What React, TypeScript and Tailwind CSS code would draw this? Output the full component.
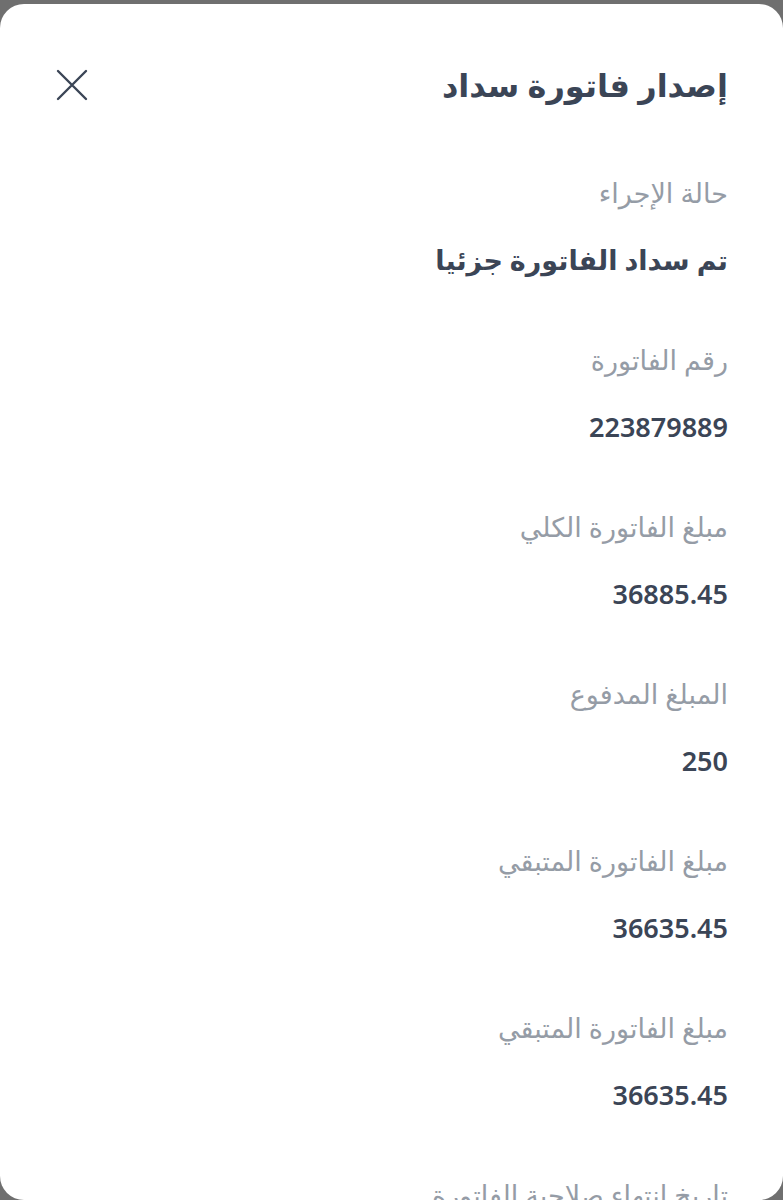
const rows = [
  { label: "حالة الإجراء", value: "تم سداد الفاتورة جزئيا" },
  { label: "رقم الفاتورة", value: "223879889" },
  { label: "مبلغ الفاتورة الكلي", value: "36885.45" },
  { label: "المبلغ المدفوع", value: "250" },
  { label: "مبلغ الفاتورة المتبقي", value: "36635.45" },
  { label: "مبلغ الفاتورة المتبقي", value: "36635.45" },
  { label: "تاريخ انتهاء صلاحية الفاتورة", value: "" },
]

export default function App() {
  return (
    <div className="h-[1200px] overflow-hidden bg-[#6f6f6f] pt-[4px] font-['Noto_Sans','DejaVu_Sans',sans-serif]">
      <div dir="rtl" className="h-[1196px] overflow-hidden rounded-[24px] bg-white pl-[55px] pr-[55px] pt-[53px]">
        <header className="flex h-[56px] items-center justify-between">
          <h1 className="text-[32px] font-bold text-[#3b4556]">إصدار فاتورة سداد</h1>
          <button className="flex h-[34px] w-[34px] items-center justify-center text-[#3b4556]">
            <svg viewBox="0 0 32 32" className="h-[32px] w-[32px]" fill="none" stroke="currentColor" strokeWidth={2.4} strokeLinecap="round">
              <path d="M2 2 30 30M30 2 2 30" />
            </svg>
          </button>
        </header>

        <div className="mt-[60px] flex flex-col gap-[60px]">
          {rows.map((row, i) => (
            <div key={i} className="flex flex-col gap-[27px]">
              <p className="text-[27px] leading-[40px] text-[#959ca6]">{row.label}</p>
              {row.value ? (
                <p className="text-[27px] font-semibold leading-[40px] text-[#3b4556]">{row.value}</p>
              ) : null}
            </div>
          ))}
        </div>
      </div>
    </div>
  )
}
